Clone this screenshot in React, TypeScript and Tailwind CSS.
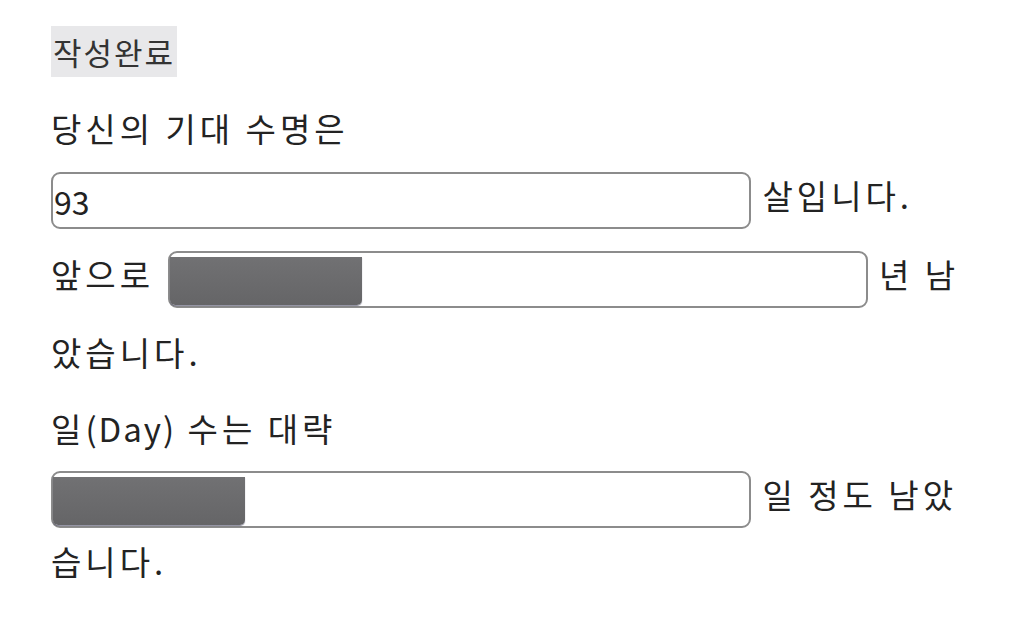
import { useState } from "react";

interface MaskedProps {
    value: string;
    onChange: (v: string) => void;
    masked?: boolean;
    className?: string;
}

function Masked({ value, onChange, masked, className = "" }: MaskedProps) {
    return (
        <span className={"relative inline-block align-middle " + className}>
            <input
                type="text"
                value={value}
                onChange={(e) => onChange(e.target.value)}
                className="block w-[700px] h-[57px] rounded-[9px] border-2 border-[#8c8c8c] bg-white px-[1px] text-[32px] tracking-normal text-[#222] outline-none"
            />
            {masked && (
                <span className="absolute left-[2px] top-[6px] bottom-[3px] w-[192px] rounded-b-[5px] bg-gradient-to-b from-[#717173] to-[#656567] shadow-[0_1px_1px_rgba(60,60,90,0.6)]" />
            )}
        </span>
    );
}

export default function App() {
    const [age, setAge] = useState("93");
    const [years, setYears] = useState("");
    const [days, setDays] = useState("");

    return (
        <div className="min-h-screen bg-white pt-[26px] pl-[51px] font-['Noto_Sans_CJK_KR','Noto_Sans',sans-serif] text-[#232323]">
            <button className="bg-[#e8e8ea] px-[2px] text-[31px] tracking-[2px] leading-[51px] text-[#333]">작성완료</button>

            <div className="w-[924px] tracking-[4px]">
                <p className="mt-[18px] text-[33px] leading-[66px]">
                    당신의 기대 수명은{" "}
                    <Masked value={age} onChange={setAge} className="my-[11px]" />{" "}
                    살입니다.
                    <br />
                    앞으로{" "}
                    <Masked value={years} onChange={setYears} masked className="my-[11px] ml-[2px]" />{" "}
                    년 남았습니다.
                </p>

                <p className="mt-[10px] text-[33px] leading-[66px]">
                    일<span className="tracking-[2px]">(Day)</span> 수는 대략{" "}
                    <Masked value={days} onChange={setDays} masked />{" "}
                    일 정도 남았습니다.
                </p>
            </div>
        </div>
    );
}
